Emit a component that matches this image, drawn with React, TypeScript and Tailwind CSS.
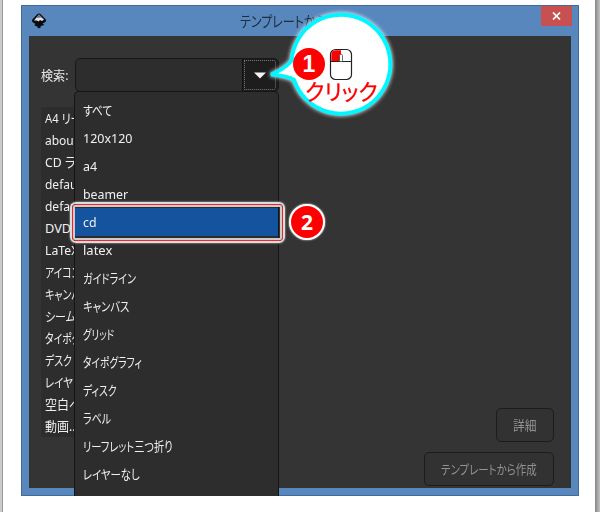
import clsx from "clsx";

// The list is mostly covered by the open dropdown
const templates = [
  { label: "A4 リー", scale: "scale-x-[0.88]" },
  { label: "about", scale: "scale-x-[0.94]" },
  { label: "CD ラ", scale: "scale-x-[0.96]" },
  { label: "defau", scale: "scale-x-[0.94]" },
  { label: "defau", scale: "scale-x-[0.94]" },
  { label: "DVD", scale: "scale-x-100" },
  { label: "LaTeX", scale: "scale-x-[0.96]" },
  { label: "アイコン", scale: "scale-x-[0.77]" },
  { label: "キャンバ", scale: "scale-x-[0.78]" },
  { label: "シーム", scale: "scale-x-[0.86]" },
  { label: "タイポグ", scale: "scale-x-[0.77]" },
  { label: "デスク", scale: "scale-x-[0.77]" },
  { label: "レイヤ", scale: "scale-x-[0.82]" },
  { label: "空白ペ", scale: "scale-x-[0.94]" },
  { label: "動画..", scale: "scale-x-[0.94]" },
];

const keywords = [
  { label: "すべて", scale: "scale-x-[0.84]" },
  { label: "120x120", scale: "scale-x-[0.98]" },
  { label: "a4", scale: "scale-x-[0.98]" },
  { label: "beamer", scale: "scale-x-[0.97]" },
  { label: "cd", scale: "scale-x-[0.97]" },
  { label: "latex", scale: "scale-x-[1.02]" },
  { label: "ガイドライン", scale: "scale-x-[0.79]" },
  { label: "キャンバス", scale: "scale-x-[0.81]" },
  { label: "グリッド", scale: "scale-x-[0.74]" },
  { label: "タイポグラフィ", scale: "scale-x-[0.76]" },
  { label: "ディスク", scale: "scale-x-[0.77]" },
  { label: "ラベル", scale: "scale-x-[0.78]" },
  { label: "リーフレット三つ折り", scale: "scale-x-[0.8]" },
  { label: "レイヤーなし", scale: "scale-x-[0.81]" },
];

// Condensed UI text, the kana are narrower than the Latin letters
function Label({ text, className }: { text: string; className?: string }) {
  return (
    <span
      className={clsx(
        "inline-block origin-left whitespace-nowrap [font-feature-settings:'palt']",
        className,
      )}
    >
      {text}
    </span>
  );
}

function InkscapeIcon() {
  return (
    <svg className="h-[18px] w-[18px]" viewBox="0 0 18 18">
      <path
        d="M9 1.5 Q10 1.5 11 2.6 L15.8 7.6 Q16.9 9.2 15 10.2 L12.6 11.5 Q15 12.6 13 13.6 L10.5 14 Q11.5 15.8 9 16.2 Q6.6 15.8 7.4 14.6 L4.6 13.4 Q3.8 12.8 5.6 12 L3 10.4 Q1.1 9.3 2.3 7.6 L7 2.6 Q8 1.5 9 1.5Z"
        fill="#080c12"
      />
      <path d="M9 2.6 L14 7.6 L12 9 L10 8 L8.6 9.4 L7 8.4 L4 8.6 Z" fill="#dfe3ea" />
      <path d="M9 2.6 L14 7.6 L10.8 5.6 L6 6 Z" fill="#69717c" />
    </svg>
  );
}

function Titlebar() {
  return (
    <div className="flex h-[30px] items-start justify-between pl-2">
      <div className="flex items-center pt-[6px]">
        <InkscapeIcon />
        <div className="w-[192px]" />
        <Label
          text="テンプレートから作成"
          className="scale-x-[0.8] text-[15px] leading-[18px] text-[#222d3b]"
        />
      </div>
      <button className="mr-[6px] flex h-5 w-[31px] items-center justify-center bg-[#c75050]">
        <svg className="h-2 w-[9px]" viewBox="0 0 9 8">
          <path d="M1 .5 L8 7.5 M8 .5 L1 7.5" stroke="#fff" strokeWidth="1.7" />
        </svg>
      </button>
    </div>
  );
}

function Dropdown() {
  return (
    <div className="absolute top-[91px] left-[74px] h-[405px] w-[205px] rounded-t-[5px] border border-b-0 border-[#151515] bg-[#2d2d2d] pt-1">
      <ul>
        {keywords.map(({ label, scale }) => (
          <li
            key={label}
            className={clsx(
              "flex h-7 items-center pl-2 text-[#f0f0f0]",
              label === "cd" && "bg-[#15539e]",
            )}
          >
            <Label text={label} className={scale} />
          </li>
        ))}
      </ul>
    </div>
  );
}

function ClickBalloon() {
  return (
    <div className="absolute top-0 left-[260px] h-[130px] w-[144px]">
      <svg className="absolute inset-0 h-full w-full" viewBox="260 0 144 130">
        <path
          d="M291.5 61 A49.5 49.5 0 1 1 294 80 Q288 76 271 74.5 Q283 70 291.5 61Z"
          fill="#fff"
          stroke="#00f7ff"
          strokeWidth="4"
          className="[filter:drop-shadow(0_0_2px_#fff)]"
        />
        <rect x="330.5" y="49.5" width="21" height="30" rx="5" fill="#fff" stroke="#222" strokeWidth="1.2" />
        <path d="M331.3 61 V55 Q331.3 50.3 336 50.3 H341 V61Z" fill="#f00" />
        <path d="M330.5 61.5 H352" stroke="#222" />
        <rect x="339.5" y="54.5" width="3" height="7" rx="1" fill="#fff" stroke="#444" strokeWidth=".8" />
      </svg>
      <div className="absolute top-12 left-[33px] flex h-8 w-8 items-center justify-center rounded-full bg-[#f00] font-['Liberation_Sans',sans-serif] text-[23px] font-bold text-white">
        1
      </div>
      <Label
        text="クリック"
        className="absolute top-[79px] left-[45px] scale-x-[0.97] text-[22px] leading-[24px] text-[#f00] [-webkit-text-stroke:0.3px_#f00]"
      />
    </div>
  );
}

export default function App() {
  return (
    <div className="relative flex h-[512px] w-[600px] justify-between overflow-hidden bg-white font-['Noto_Sans','Noto_Sans_CJK_JP',sans-serif] text-[12.75px] leading-[18px]">
      <div className="w-[3px] border-r border-[#999] bg-[#cbcbcb]" />
      <div className="mt-[5px] mr-[16px] ml-[18px] flex h-[491px] w-[558px] flex-col border border-[#446a98] bg-[#5887bd]">
        <Titlebar />
        <main className="mx-[7px] flex h-[452px] flex-col bg-[#343434]">
          <div className="flex pt-[22px] pl-3 text-[#e6e6e6]">
            <div className="flex h-[34px] w-[34px] items-center">
              <Label text="検索:" className="scale-x-[0.95]" />
            </div>
            <div className="flex h-[34px] w-[204px] justify-end rounded-[5px] border border-[#181818] bg-[#2d2d2d]">
              <button className="flex w-[36px] items-center justify-center rounded-r-[4px] border-l border-[#111] bg-[#1d1d1d] p-px pr-[2px]">
                <span className="flex h-full w-full items-center justify-center rounded-r-[3px] border border-dotted border-[#777]">
                  <svg className="h-[7px] w-3" viewBox="0 0 12 7">
                    <path d="M0 .5 H12 L6 6.5Z" fill="#f4f4f4" />
                  </svg>
                </span>
              </button>
            </div>
          </div>
          <div className="mt-[15px] ml-3 h-[330px] w-[200px] bg-[#2d2d2d] text-[#f0f0f0]">
            {templates.map(({ label, scale }, i) => (
              <div key={i} className="flex h-[22px] items-center pl-1">
                <Label text={label} className={scale} />
              </div>
            ))}
          </div>
          <div className="mt-[-29px] mr-[17px] flex flex-col items-end gap-[10px] text-[#929292]">
            <button className="flex h-[34px] w-[58px] items-center rounded-[5px] border border-[#1c1c1c] bg-[#323232] pl-4">
              <Label text="詳細" className="scale-x-[0.92]" />
            </button>
            <button className="flex h-[34px] w-[130px] items-center rounded-[5px] border border-[#1c1c1c] bg-[#323232] pl-4">
              <Label text="テンプレートから作成" className="scale-x-[0.82]" />
            </button>
          </div>
        </main>
      </div>
      <div className="w-[5px] bg-linear-to-r from-[#858585] to-[#c4c4c4]" />

      <Dropdown />
      <div className="absolute top-[202px] left-[70px] h-[41px] w-[215px] rounded-[6px] border-2 border-[#ddd] shadow-[0_0_2px_#ddd]">
        <div className="h-full w-full rounded-[4px] border-[1.5px] border-[#f5222d]">
          <div className="h-full w-full rounded-[2px] border-2 border-[#ccc]" />
        </div>
      </div>
      <div className="absolute top-[204px] left-[289px] flex h-9 w-9 items-center justify-center rounded-full border-2 border-white bg-[#f00] text-[21px] font-bold text-white shadow-[0_0_2px_#fff]">
        2
      </div>
      <ClickBalloon />
    </div>
  );
}
